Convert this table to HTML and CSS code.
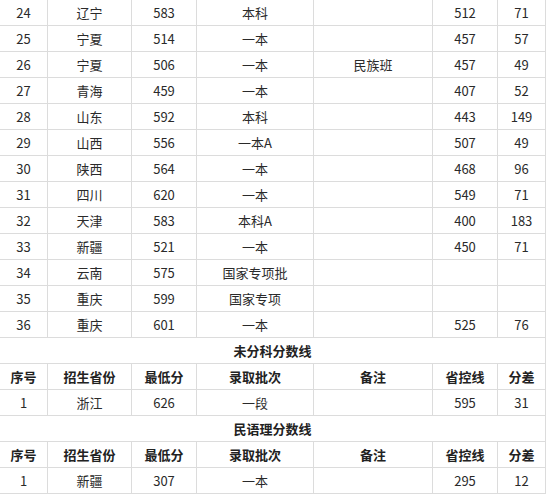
FILE: index.html
```html
<!DOCTYPE html>
<html lang="zh">
<head>
<meta charset="utf-8">
<link rel="stylesheet" href="styles.css">
</head>
<body>
<table class="scores">
<colgroup>
<col class="c1"><col class="c2"><col class="c3"><col class="c4"><col class="c5"><col class="c6"><col class="c7">
</colgroup>
<tbody>
<tr><td>24</td><td>辽宁</td><td>583</td><td>本科</td><td></td><td>512</td><td>71</td></tr>
<tr><td>25</td><td>宁夏</td><td>514</td><td>一本</td><td></td><td>457</td><td>57</td></tr>
<tr><td>26</td><td>宁夏</td><td>506</td><td>一本</td><td>民族班</td><td>457</td><td>49</td></tr>
<tr><td>27</td><td>青海</td><td>459</td><td>一本</td><td></td><td>407</td><td>52</td></tr>
<tr><td>28</td><td>山东</td><td>592</td><td>本科</td><td></td><td>443</td><td>149</td></tr>
<tr><td>29</td><td>山西</td><td>556</td><td>一本A</td><td></td><td>507</td><td>49</td></tr>
<tr><td>30</td><td>陕西</td><td>564</td><td>一本</td><td></td><td>468</td><td>96</td></tr>
<tr><td>31</td><td>四川</td><td>620</td><td>一本</td><td></td><td>549</td><td>71</td></tr>
<tr><td>32</td><td>天津</td><td>583</td><td>本科A</td><td></td><td>400</td><td>183</td></tr>
<tr><td>33</td><td>新疆</td><td>521</td><td>一本</td><td></td><td>450</td><td>71</td></tr>
<tr><td>34</td><td>云南</td><td>575</td><td>国家专项批</td><td></td><td></td><td></td></tr>
<tr><td>35</td><td>重庆</td><td>599</td><td>国家专项</td><td></td><td></td><td></td></tr>
<tr><td>36</td><td>重庆</td><td>601</td><td>一本</td><td></td><td>525</td><td>76</td></tr>
<tr class="title"><td colspan="7">未分科分数线</td></tr>
<tr class="head"><td>序号</td><td>招生省份</td><td>最低分</td><td>录取批次</td><td>备注</td><td>省控线</td><td>分差</td></tr>
<tr><td>1</td><td>浙江</td><td>626</td><td>一段</td><td></td><td>595</td><td>31</td></tr>
<tr class="title"><td colspan="7">民语理分数线</td></tr>
<tr class="head"><td>序号</td><td>招生省份</td><td>最低分</td><td>录取批次</td><td>备注</td><td>省控线</td><td>分差</td></tr>
<tr><td>1</td><td>新疆</td><td>307</td><td>一本</td><td></td><td>295</td><td>12</td></tr>
</tbody>
</table>
</body>
</html>
```
FILE: styles.css
```css
html, body {
  margin: 0;
  padding: 0;
  background: #ffffff;
}
body {
  font-family: "Noto Sans CJK SC", "Noto Sans", sans-serif;
  font-size: 13px;
  color: #2a2a2a;
  overflow: hidden;
}
.scores {
  border-collapse: collapse;
  table-layout: fixed;
  width: 547px;
  margin: -1px 0 0 -1px;
}
.c1 { width: 48px; }
.c2 { width: 84px; }
.c3 { width: 65px; }
.c4 { width: 117px; }
.c5 { width: 119px; }
.c6 { width: 65px; }
.c7 { width: 48px; }
.scores td {
  border: 1px solid #dcdcdc;
  height: 25px;
  padding: 0;
  text-align: center;
  vertical-align: middle;
  line-height: 16px;
  white-space: nowrap;
}
.scores .title td,
.scores .head td {
  font-weight: bold;
  color: #222222;
}
```
